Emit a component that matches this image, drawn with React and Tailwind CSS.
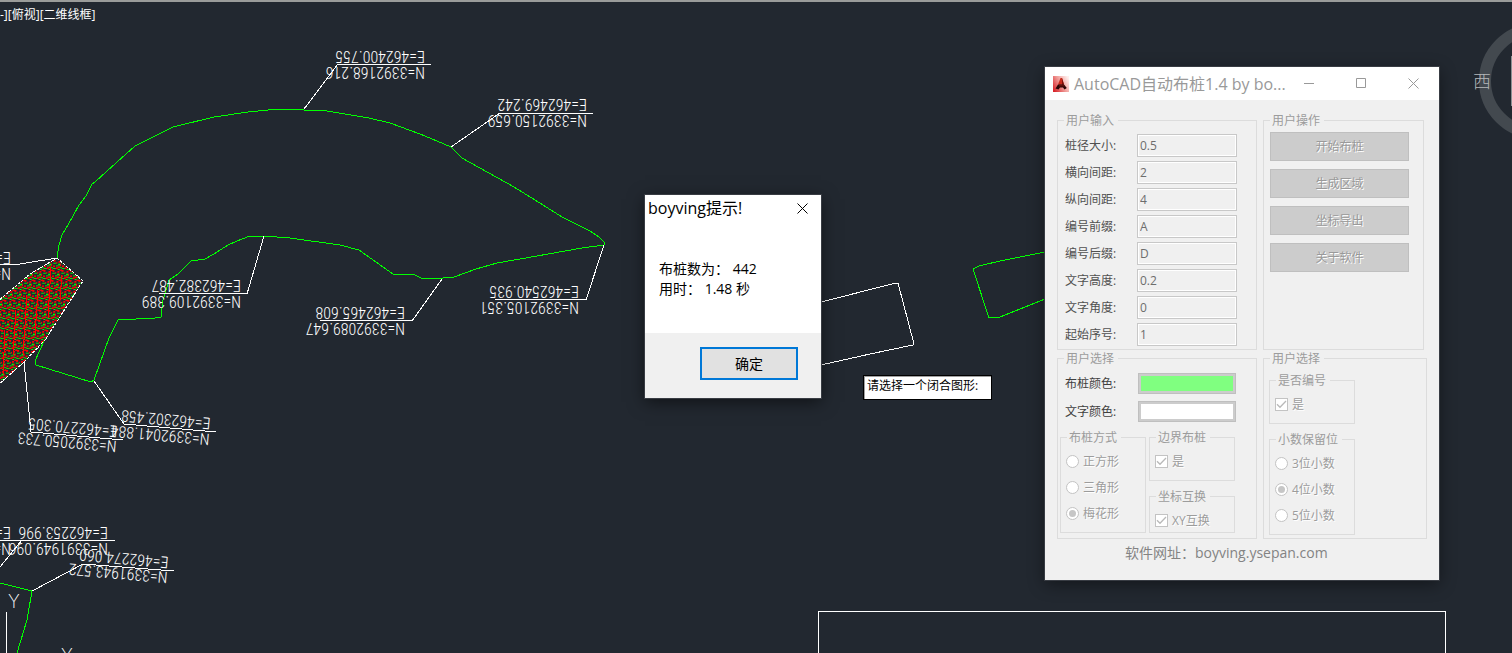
const FONT = "font-['Open_Sans','Noto_Sans_CJK_SC',sans-serif]";

const POINT_LABELS = [
  { e: "E=462400.755", n: "N=3392168.216", x: 425, ey: 51, ny: 67, path: "304,109 338,64 431,64" },
  { e: "E=462469.242", n: "N=3392150.659", x: 587, ey: 99, ny: 115, path: "451,147 500,113 593,113" },
  { e: "E=462382.487", n: "N=3392109.389", x: 241, ey: 280, ny: 296, path: "264,236 247,294 158,293" },
  { e: "E=462465.608", n: "N=3392089.647", x: 405, ey: 307, ny: 323, path: "442,279 412,321 319,320" },
  { e: "E=462540.935", n: "N=3392105.351", x: 579, ey: 286, ny: 302, path: "604,245 586,300 494,299" },
  { e: "E=462302.458", n: "N=3392041.884", x: 211, nx: 210, ey: 418, ny: 434, tilt: 5, path: "94,381 124,424 216,432" },
  { e: "E=462270.305", n: "N=3392050.733", x: 118, nx: 117, ey: 426, ny: 441, tilt: 5, path: "24,362 31,432 123,440" },
  { e: "E=462253.996", n: "N=3391949.096", x: 108, ey: 527, ny: 543, path: "0,567 22,540 115,540" },
  { e: "E=462274.060", n: "N=3391943.572", x: 169, nx: 168, ey: 557, ny: 572, tilt: 5, path: "32,591 83,564 174,571" },
  { e: "E=", n: "N=", x: 11, ey: 527, ny: 543, path: "0,541 22,540" },
  { e: "E=", n: "N=", x: 11, ey: 252, ny: 268, path: "0,264 20,264 57,258" },
];

function PointLabel({ e, n, x, nx = x, ey, ny, tilt = 0, path }) {
  const angle = 180 + tilt;
  return (
    <g>
      <polyline points={path} fill="none" stroke="#fff" shapeRendering="crispEdges" />
      <text transform={`translate(${x} ${ey}) rotate(${angle})`}>{e}</text>
      <text transform={`translate(${nx} ${ny}) rotate(${angle})`}>{n}</text>
    </g>
  );
}

function Drawing() {
  return (
    <svg className="absolute inset-0 h-full w-full" aria-label="图纸">
      <defs>
        <pattern id="piles" width="9" height="10" patternUnits="userSpaceOnUse" patternTransform="skewX(-6)">
          <g shapeRendering="crispEdges">
            <path d="M0 0h2v2h-2zM5 1h2v2h-2zM0 5h2v2h-2zM5 6h2v2h-2zM3 2h1v2h-1zM7 4h1v2h-1zM3 7h2v2h-2zM8 9h1v1h-1zM7 0h2v1h-2z" fill="#f00" />
            <path d="M0 3h3v1h-3zM5 4h2v1h-2zM0 8h3v1h-3zM5 9h2v1h-2zM3 5h2v1h-2zM7 7h2v1h-2z" fill="#0f0" />
          </g>
        </pattern>
      </defs>
      <g fill="none" stroke="#0f0" shapeRendering="crispEdges">
        <polyline points="57,258 59,245 62,235 68,225 79,205 86,196 92,184 95,182 107,171 135,146 173,127 214,117 248,112 278,109 304,110 327,111 369,118 390,123 420,134 437,141 451,147 462,158 514,187 535,200 562,217 590,231 599,237 604,242 604,245 582,248 520,259 497,263 476,269 454,277 433,279 421,278 413,274 393,274 376,262 359,250 340,245 290,238 264,236 250,236 237,241 228,245 214,254 205,259 191,261 178,274 169,280 163,300 161,317 155,318 118,320 109,338 94,380 91,382 36,365 35,361 44,341" />
        <polyline points="0,583 32,591 27,620 17,653" />
        <polyline points="1060,249 1000,261 979,266 973,269 989,318 1000,317 1060,293" />
      </g>
      <polygon points="57,258 83,281 45,340 24,362 -2,385 -2,301 30,274" fill="url(#piles)" stroke="#fff" strokeDasharray="3 1" shapeRendering="crispEdges" />
      <path d="M51 268l-3 50M38 290l-3 45M27 295l-4 60M16 310l-3 45M5 330l-2 45M62 275l-2 25" stroke="#f00" shapeRendering="crispEdges" />
      <g fill="none" stroke="#fff" shapeRendering="crispEdges">
        <polyline points="810,305 821,302 892,284 898,283 914,344 913,345 870,354 830,363 810,367" />
        <polyline points="818,700 818,611 1445,611 1445,700" />
        <path d="M6 612v60" />
      </g>
      <g className="font-['Roboto_Condensed','Roboto',sans-serif] text-[16px] font-light" fill="#fff">
        {POINT_LABELS.map((label) => (
          <PointLabel key={`${label.e}${label.x}${label.ey}`} {...label} />
        ))}
      </g>
      <g className="font-['Inter',sans-serif] text-[18px] font-extralight" fill="#fff">
        <text x="8" y="608">Y</text>
        <text x="61" y="662">Y</text>
      </g>
    </svg>
  );
}

function Compass() {
  return (
    <svg className="absolute right-0 top-0 h-40 w-10" viewBox="0 0 40 160" aria-label="方位">
      <circle cx="65" cy="81" r="52" fill="none" stroke="#43494f" strokeWidth="12" />
      <path d="M39.5 56v50" stroke="#8b9094" />
      <text x="1" y="88" className="font-['Noto_Sans_CJK_SC',sans-serif] text-[18px] font-light" fill="#b5b8ba">西</text>
    </svg>
  );
}

function Group({ title, className = "", children }) {
  return (
    <fieldset className={`min-w-0 border border-[#dcdcdc] ${className}`}>
      <legend className="ml-1.5 h-4 pl-0.5 pr-1 leading-[18px] text-[#9c9c9c]">{title}</legend>
      {children}
    </fieldset>
  );
}

function Choice({ type, name, label, checked }) {
  return (
    <label className="flex h-[26px] items-center gap-1 text-[#9c9c9c] [text-shadow:1px_1px_0_#fff]">
      <span className="relative grid h-[13px] w-[13px] place-items-center">
        <input
          type={type}
          name={name}
          defaultChecked={checked}
          disabled
          className={`absolute inset-0 appearance-none border border-[#c3c3c3] bg-white ${type === "radio" ? "rounded-full" : ""}`}
        />
        {checked && type === "radio" && <span className="relative h-[7px] w-[7px] rounded-full bg-[#c6c6c6]" />}
        {checked && type === "checkbox" && (
          <svg className="relative h-[13px] w-[13px]" viewBox="0 0 13 13">
            <path d="M2 6.2 5 9.3 11 3" fill="none" stroke="#b9b9b9" strokeWidth="1.3" />
          </svg>
        )}
      </span>
      <span className="pt-0.5">{label}</span>
    </label>
  );
}

const FIELDS = [
  ["桩径大小:", "0.5"],
  ["横向间距:", "2"],
  ["纵向间距:", "4"],
  ["编号前缀:", "A"],
  ["编号后缀:", "D"],
  ["文字高度:", "0.2"],
  ["文字角度:", "0"],
  ["起始序号:", "1"],
];

const ACTIONS = ["开始布桩", "生成区域", "坐标导出", "关于软件"];

function InputGroup() {
  return (
    <Group title="用户输入" className="h-[238px]">
      <div className="flex flex-col gap-1 pl-[7px] pt-1.5">
        {FIELDS.map(([label, value], i) => (
          <div key={label} className="flex items-center">
            <label htmlFor={`field-${i}`} className="w-[72px] text-[#505050]">{label}</label>
            <input
              id={`field-${i}`}
              defaultValue={value}
              disabled
              className="h-[23px] w-[100px] border border-[#c8c8c8] bg-[#f0f0f0] px-0.5 text-[#6d6d6d] shadow-[inset_0_0_0_1px_#fff]"
            />
          </div>
        ))}
      </div>
    </Group>
  );
}

function ColorRow({ id, label, swatch }) {
  return (
    <div className="flex items-center">
      <label htmlFor={id} className="w-[73px] text-[#404040]">{label}</label>
      <button id={id} type="button" disabled className="h-[21px] w-[98px] border border-[#bfbfbf] bg-[#ccc] p-0.5">
        <span className={`block h-full w-full ${swatch}`} />
      </button>
    </div>
  );
}

function StyleGroup() {
  return (
    <Group title="用户选择" className="h-[189px]">
      <div className="flex flex-col gap-[7px] pl-[7px] pt-[7px]">
        <ColorRow id="pile-color" label="布桩颜色:" swatch="bg-[#80ff80]" />
        <ColorRow id="text-color" label="文字颜色:" swatch="bg-white" />
      </div>
      <div className="flex gap-[3px] pl-0.5 pt-[7px]">
        <Group title="布桩方式" className="h-[104px] w-[86px]">
          <div className="pl-[5px] pt-[3px]">
            <Choice type="radio" name="layout" label="正方形" />
            <Choice type="radio" name="layout" label="三角形" />
            <Choice type="radio" name="layout" label="梅花形" checked />
          </div>
        </Group>
        <div className="flex w-[86px] flex-col gap-[7px]">
          <Group title="边界布桩" className="h-[52px]">
            <div className="pl-[5px] pt-[3px]">
              <Choice type="checkbox" name="border" label="是" checked />
            </div>
          </Group>
          <Group title="坐标互换" className="h-[45px]">
            <div className="pl-[5px] pt-[3px]">
              <Choice type="checkbox" name="swap" label="XY互换" checked />
            </div>
          </Group>
        </div>
      </div>
    </Group>
  );
}

function NumberGroup() {
  return (
    <Group title="用户选择" className="h-[189px] w-[164px]">
      <div className="flex w-[91px] flex-col gap-[7px] pl-[5px] pt-1.5">
        <Group title="是否编号" className="h-[52px]">
          <div className="pl-[5px] pt-[3px]">
            <Choice type="checkbox" name="numbered" label="是" checked />
          </div>
        </Group>
        <Group title="小数保留位" className="h-[104px]">
          <div className="pl-[5px] pt-[3px]">
            <Choice type="radio" name="digits" label="3位小数" />
            <Choice type="radio" name="digits" label="4位小数" checked />
            <Choice type="radio" name="digits" label="5位小数" />
          </div>
        </Group>
      </div>
    </Group>
  );
}

function AppIcon() {
  return (
    <svg className="h-4 w-4 shrink-0" viewBox="0 0 16 16" aria-hidden="true">
      <defs>
        <linearGradient id="icon-bg" x1="0" y1="0.8" x2="1" y2="0.2">
          <stop offset="0" stopColor="#d8262c" />
          <stop offset="0.5" stopColor="#f09a96" />
          <stop offset="1" stopColor="#fff0ee" />
        </linearGradient>
      </defs>
      <rect width="16" height="16" fill="url(#icon-bg)" />
      <path d="M7.5 2H9L11 8.5H5z" fill="#c92a1c" />
      <path d="M9 2l2 6.500L9 9z" fill="#7d120c" />
      <path d="M5 8.500 2.500 12.500 5.500 13.500 7 11.500H10L11.500 13.500 13.800 12 11 8.500z" fill="#2a0505" />
      <path d="M6 8.500h4.500l1 2H6z" fill="#5e0d0a" />
    </svg>
  );
}

function ToolWindow() {
  return (
    <section className="absolute right-[73px] top-[67px] w-[394px] bg-[#f0f0f0] text-xs shadow-[0_0_0_1px_#383c43,0_4px_16px_rgba(0,0,0,0.45)]">
      <header className="flex h-[33px] items-center bg-white pl-2 text-[#999]">
        <AppIcon />
        <h1 className="min-w-0 flex-1 whitespace-nowrap pl-[5px] text-base">AutoCAD自动布桩1.4 by bo...</h1>
        <div className="flex shrink-0">
          <button type="button" aria-label="最小化" className="grid h-[33px] w-[51px] place-items-center">
            <svg className="h-[11px] w-[11px]"><path d="M0 5.5h10" stroke="#999" /></svg>
          </button>
          <button type="button" aria-label="最大化" className="grid h-[33px] w-[52px] place-items-center">
            <svg className="h-[11px] w-[11px]"><path d="M.5 .5h9v9h-9z" fill="none" stroke="#999" /></svg>
          </button>
          <button type="button" aria-label="关闭" className="grid h-[33px] w-[52px] place-items-center">
            <svg className="h-[11px] w-[11px]"><path d="M.5 .5l10 10M10.5 .5l-10 10" stroke="#999" /></svg>
          </button>
        </div>
      </header>
      <div className="flex gap-1.5 px-3 pt-3">
        <div className="w-[200px]">
          <InputGroup />
          <StyleGroup />
        </div>
        <div>
          <Group title="用户操作" className="h-[238px] w-[161px]">
            <div className="flex flex-col gap-2 pl-1.5 pt-1">
              {ACTIONS.map((action) => (
                <button
                  key={action}
                  type="button"
                  disabled
                  className="h-[29px] w-[139px] border border-[#bfbfbf] bg-[#ccc] text-[#9a9a9a] [text-shadow:1px_1px_0_#fff]"
                >
                  {action}
                </button>
              ))}
            </div>
          </Group>
          <NumberGroup />
        </div>
      </div>
      <footer className="pb-4 pl-20 pt-[3px] text-sm leading-[22px] text-[#838383]">软件网址：boyving.ysepan.com</footer>
    </section>
  );
}

function ResultDialog() {
  return (
    <section role="dialog" aria-labelledby="dialog-title" className="absolute left-[645px] top-[195px] w-44 bg-white text-black shadow-[0_0_0_1px_#383c43,0_4px_16px_rgba(0,0,0,0.55)]">
      <header className="flex h-[26px] items-center justify-between pl-[3px]">
        <h2 id="dialog-title" className="text-base">boyving提示!</h2>
        <button type="button" aria-label="关闭" className="grid h-[26px] w-[37px] place-items-center">
          <svg className="h-[11px] w-[11px]"><path d="M.5 .5l10 10M10.5 .5l-10 10" stroke="#000" /></svg>
        </button>
      </header>
      <p className="h-28 whitespace-pre-line pl-3.5 pt-[38px] text-sm leading-5">{"布桩数为： 442\n用时： 1.48 秒"}</p>
      <footer className="flex h-[65px] items-center justify-end bg-[#f0f0f0] pb-1 pr-[23px]">
        <button type="button" className="h-[33px] w-[98px] border-2 border-[#0078d7] bg-[#e1e1e1] text-sm">确定</button>
      </footer>
    </section>
  );
}

export default function App() {
  return (
    <main className={`relative min-h-screen overflow-hidden border-t-2 border-[#9a9c9a] bg-[#222830] ${FONT}`}>
      <div className="absolute -top-0.5 bottom-0 left-0 right-0">
        <Drawing />
        <Compass />
        <p className="absolute left-0 top-1.5 text-xs leading-[18px] text-white">-][俯视][二维线框]</p>
        <p role="tooltip" className="absolute left-[863px] top-[375px] h-[25px] w-[129px] whitespace-nowrap border border-black bg-white pl-[3px] text-xs leading-[20px] text-black shadow-[inset_1px_1px_0_#a0a0a0]">
          请选择一个闭合图形:
        </p>
        <ResultDialog />
        <ToolWindow />
      </div>
      <div className="absolute inset-x-0 -top-0.5 h-0.5 bg-[#9a9c9a]" />
    </main>
  );
}
